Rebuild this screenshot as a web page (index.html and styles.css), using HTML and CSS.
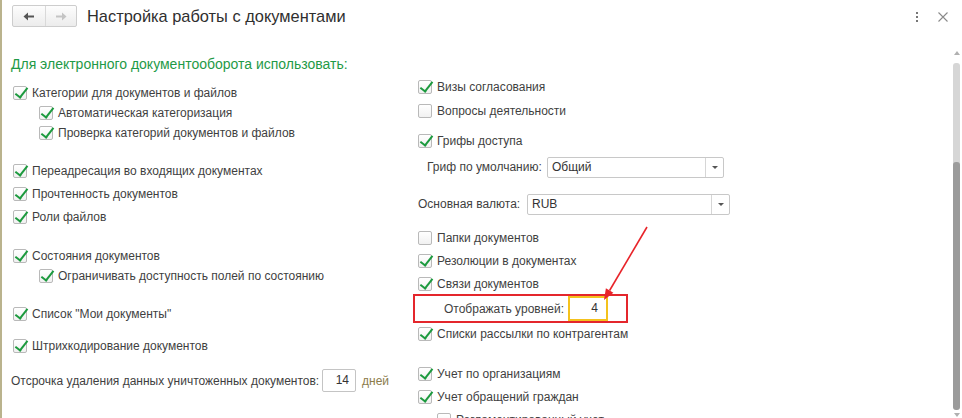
FILE: index.html
```html
<!DOCTYPE html>
<html lang="ru">
  <head>
    <meta charset="UTF-8" />
    <meta name="viewport" content="width=device-width, initial-scale=1.0" />
    <title>Настройка работы с документами</title>
    <link rel="stylesheet" href="styles.css">
  </head>
  <body>
    <div class="window">
      <!-- Header -->
      <div class="topbar">
        <div class="nav">
          <div class="nav-btn">
            <svg width="12" height="9" viewBox="0 0 12 9"><path d="M11 4.5H4" stroke="#555" stroke-width="2"/><path d="M0.5 4.5L5 0.5V8.5Z" fill="#555"/></svg>
          </div>
          <div class="nav-btn">
            <svg width="12" height="9" viewBox="0 0 12 9"><path d="M1 4.5H8" stroke="#c4c4c4" stroke-width="2"/><path d="M11.5 4.5L7 0.5V8.5Z" fill="#c4c4c4"/></svg>
          </div>
        </div>
        <h1 class="title">Настройка работы с документами</h1>
        <div class="tools">
          <svg class="kebab" width="4" height="12" viewBox="0 0 4 12"><rect x="1" y="1" width="2" height="2" fill="#777"/><rect x="1" y="5" width="2" height="2" fill="#777"/><rect x="1" y="9" width="2" height="2" fill="#777"/></svg>
          <svg class="close" width="10" height="10" viewBox="0 0 10 10"><path d="M0.5 0.5L9.5 9.5M9.5 0.5L0.5 9.5" stroke="#8a8a8a" stroke-width="1.1"/></svg>
        </div>
      </div>

      <div class="main">
        <div class="columns">
          <!-- Left column -->
          <div class="col col-left">
            <h2 class="heading">Для электронного документооборота использовать:</h2>

            <div class="group mt-10">
              <div class="row"><span class="cb on"></span>Категории для документов и файлов</div>
              <div class="row sub"><span class="cb on"></span>Автоматическая категоризация</div>
              <div class="row sub"><span class="cb on"></span>Проверка категорий документов и файлов</div>
            </div>

            <div class="group gap-3 mt-18">
              <div class="row"><span class="cb on"></span>Переадресация во входящих документах</div>
              <div class="row"><span class="cb on"></span>Прочтенность документов</div>
              <div class="row"><span class="cb on"></span>Роли файлов</div>
            </div>

            <div class="group mt-19">
              <div class="row"><span class="cb on"></span>Состояния документов</div>
              <div class="row sub"><span class="cb on"></span>Ограничивать доступность полей по состоянию</div>
            </div>

            <div class="row mt-18"><span class="cb on"></span>Список "Мои документы"</div>
            <div class="row mt-12"><span class="cb on"></span>Штрихкодирование документов</div>

            <div class="field mt-13">
              <span class="field-label">Отсрочка удаления данных уничтоженных документов:</span>
              <span class="num">14</span>
              <span class="unit">дней</span>
            </div>
          </div>

          <!-- Right column -->
          <div class="col col-right">
            <div class="group gap-4 mt-37">
              <div class="row"><span class="cb on"></span>Визы согласования</div>
              <div class="row"><span class="cb"></span>Вопросы деятельности</div>
            </div>

            <div class="row mt-10"><span class="cb on"></span>Грифы доступа</div>
            <div class="select-row stamp mt-5">
              <span class="select-label">Гриф по умолчанию:</span>
              <div class="select w-177"><span class="val">Общий</span><span class="drop"><i></i></span></div>
            </div>

            <div class="select-row mt-15">
              <span class="select-label">Основная валюта:</span>
              <div class="select w-203"><span class="val">RUB</span><span class="drop"><i></i></span></div>
            </div>

            <div class="group gap-3 mt-13">
              <div class="row"><span class="cb"></span>Папки документов</div>
              <div class="row"><span class="cb on"></span>Резолюции в документах</div>
              <div class="row"><span class="cb on"></span>Связи документов</div>
            </div>

            <div class="levels">
              <span class="levels-label">Отображать уровней:</span>
              <span class="num marked">4</span>
            </div>

            <div class="row mt-1"><span class="cb on"></span>Списки рассылки по контрагентам</div>

            <div class="group gap-3 mt-20">
              <div class="row"><span class="cb on"></span>Учет по организациям</div>
              <div class="row"><span class="cb on"></span>Учет обращений граждан</div>
              <div class="row sub"><span class="cb"></span>Регламентированный учет</div>
            </div>
          </div>
        </div>

        <!-- Scroll -->
        <div class="scrollbar">
          <span class="sb-up"></span>
          <span class="sb-track"></span>
          <span class="sb-thumb"></span>
          <span class="sb-down"></span>
        </div>
      </div>

      <!-- Annotation arrow -->
      <svg class="pointer" width="70" height="90" viewBox="0 0 70 90">
        <path d="M57 7L19.6 70.5" stroke="#e8242a" stroke-width="1.6"/>
        <path d="M14 80L23.4 72.7L15.9 68.3Z" fill="#e8242a"/>
      </svg>
    </div>
  </body>
</html>
```

FILE: styles.css
```css
* {
  margin: 0;
  padding: 0;
  box-sizing: border-box;
}

body {
  font-family: "Liberation Sans", Arial, sans-serif;
  background: #fff;
  color: #3f3f3f;
}

.window {
  position: relative;
  width: 962px;
  height: 418px;
  border-left: 2px solid #bab38d;
  overflow: hidden;
}

/* Header */
.topbar {
  display: flex;
  align-items: flex-start;
  height: 40px;
  padding: 5px 0 0 10px;
}

.nav {
  display: flex;
  height: 22px;
  border: 1px solid #cdcdcd;
  border-radius: 2px;
  background: linear-gradient(#fdfdfd, #ececec);
}

.nav-btn {
  width: 32px;
  display: flex;
  align-items: center;
  justify-content: center;
}

.nav-btn + .nav-btn {
  width: 31px;
  border-left: 1px solid #d9d9d9;
}

.title {
  margin-left: 10px;
  font-size: 16.4px;
  font-weight: normal;
  line-height: 22px;
  color: #2f2f2f;
}

.tools {
  margin-left: auto;
  margin-right: 14px;
  height: 24px;
  display: flex;
  align-items: center;
  gap: 19px;
}

/* Body */
.main {
  display: flex;
  height: 378px;
}

.columns {
  flex: 1;
  display: flex;
}

.col {
  display: flex;
  flex-direction: column;
}

.col > * {
  flex-shrink: 0;
}

.col-left {
  width: 411px;
  padding-left: 9px;
}

.col-right {
  flex: 1;
}

.heading {
  margin-top: 15px;
  font-size: 14px;
  font-weight: normal;
  line-height: 18px;
  color: #1f9a47;
}

.group {
  display: flex;
  flex-direction: column;
}

.gap-3 { gap: 3px; }
.gap-4 { gap: 4px; }

.mt-1 { margin-top: 1px; }
.mt-5 { margin-top: 5px; }
.mt-10 { margin-top: 10px; }
.mt-12 { margin-top: 12px; }
.mt-13 { margin-top: 13px; }
.mt-15 { margin-top: 15px; }
.mt-18 { margin-top: 18px; }
.mt-19 { margin-top: 19px; }
.mt-20 { margin-top: 20px; }
.mt-37 { margin-top: 37px; }

.row {
  display: flex;
  align-items: center;
  gap: 5px;
  height: 20px;
  padding-left: 2px;
  font-size: 12px;
  white-space: nowrap;
}

.row.sub {
  padding-left: 28px;
}

.col-right .row {
  padding-left: 5px;
}

.col-right .row.sub {
  padding-left: 24px;
}

/* Checkbox */
.cb {
  position: relative;
  flex: none;
  width: 14px;
  height: 14px;
  border: 1px solid #b9b9b9;
  border-radius: 2px;
  background: linear-gradient(#fff, #f1f1f1);
}

.cb.on::after {
  content: "";
  position: absolute;
  left: 4px;
  top: -2px;
  width: 5px;
  height: 11px;
  border-right: 2.5px solid #1c9a3e;
  border-bottom: 2.5px solid #1c9a3e;
  transform: rotate(38deg);
}

/* Inputs */
.field {
  display: flex;
  align-items: center;
  height: 23px;
  font-size: 12px;
}

.field-label {
  width: 311px;
  white-space: nowrap;
}

.num {
  width: 34px;
  height: 23px;
  border: 1px solid #c4c4c4;
  border-radius: 2px;
  padding-right: 6px;
  text-align: right;
  line-height: 21px;
  font-size: 12px;
  color: #333;
}

.unit {
  margin-left: 6px;
  color: #8c7c4c;
}

.select-row {
  display: flex;
  align-items: center;
  height: 22px;
  padding-left: 5px;
  font-size: 12px;
}

.select-row.stamp {
  padding-left: 14px;
}

.select-row .select-label {
  width: 109px;
  white-space: nowrap;
}

.select-row.stamp .select-label {
  width: 120px;
}

.select {
  display: flex;
  height: 21px;
  border: 1px solid #c8c8c8;
  border-radius: 2px;
}

.w-177 { width: 177px; }
.w-203 { width: 203px; }

.select .val {
  flex: 1;
  padding-left: 4px;
  line-height: 19px;
  color: #333;
}

.select .drop {
  width: 18px;
  border-left: 1px solid #d6d6d6;
  display: flex;
  align-items: center;
  justify-content: center;
}

.select .drop i {
  border-top: 3px solid #555;
  border-left: 3px solid transparent;
  border-right: 3px solid transparent;
}

/* Highlighted levels */
.levels {
  display: flex;
  align-items: center;
  width: 215px;
  height: 29px;
  padding-left: 29px;
  border: 2px solid #e4262c;
  font-size: 12px;
}

.levels-label {
  width: 124px;
  white-space: nowrap;
}

.num.marked {
  width: 40px;
  height: 25px;
  padding-right: 8px;
  border: 2px solid #f4c21d;
  border-radius: 0;
}

/* Scrollbar */
.scrollbar {
  width: 7px;
  margin-right: 2px;
  padding-top: 11px;
  display: flex;
  flex-direction: column;
  align-items: center;
}

.sb-up {
  border-bottom: 4px solid #b0b0b0;
  border-left: 3px solid transparent;
  border-right: 3px solid transparent;
}

.sb-track {
  width: 7px;
  height: 102px;
  margin-top: 8px;
  border-radius: 3px 3px 0 0;
  background: #d6d6d6;
}

.sb-thumb {
  width: 7px;
  height: 248px;
  margin-top: -3px;
  border-radius: 3px;
  background: #9b9b9b;
}

.sb-down {
  margin-top: 3px;
  border-top: 4px solid #b0b0b0;
  border-left: 3px solid transparent;
  border-right: 3px solid transparent;
}

/* Arrow annotation */
.pointer {
  position: absolute;
  left: 588px;
  top: 220px;
}
```
